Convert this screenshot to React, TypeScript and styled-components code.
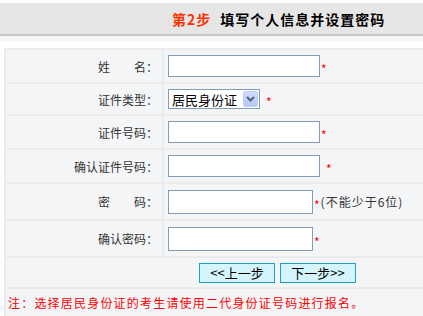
import styled, { createGlobalStyle } from 'styled-components';

const GlobalStyle = createGlobalStyle`
  * {
    box-sizing: border-box;
    margin: 0;
    padding: 0;
  }
  body {
    background: #fff;
    font-family: "Noto Sans CJK SC", "Liberation Sans", sans-serif;
    font-size: 12px;
    color: #333;
  }
`;

const Page = styled.div`
  width: 423px;
  padding-top: 3px;
  overflow: hidden;
`;

const StepBar = styled.div`
  height: 33px;
  background: #e6e6e6;
  border-bottom: 2px solid #c9c9c9;
  display: flex;
  align-items: center;
  padding-left: 172px;
  font-size: 14px;
  font-weight: bold;
  letter-spacing: 1px;
  color: #000;
`;

const StepNo = styled.span`
  color: #ff3300;
  margin-right: 9px;
`;

const Shade = styled.div`
  height: 5px;
  background: #f6f6f6;
  margin-bottom: 7px;
`;

const Table = styled.div`
  margin-left: 4px;
  width: 440px;
  display: grid;
  grid-template-columns: 156px 1fr;
  gap: 2px;
  background: #eaebed;
  padding: 2px 0 0 2px;
`;

const Label = styled.div<{ $h: number }>`
  height: ${p => p.$h}px;
  background: #f4f5f7;
  display: flex;
  align-items: center;
  justify-content: flex-end;
  padding-right: 4px;
  color: #333;
  white-space: pre;
`;

const Field = styled.div<{ $h: number }>`
  height: ${p => p.$h}px;
  background: #f4f5f7;
  display: flex;
  align-items: center;
  padding-left: 4px;
`;

const TextBox = styled.input<{ $w: number; $h: number }>`
  width: ${p => p.$w}px;
  height: ${p => p.$h}px;
  border: 1px solid #7f9db9;
  background: #fff;
  outline: none;
  font-size: 12px;
  padding: 0 3px;
`;

const Star = styled.span<{ $gap: number }>`
  color: #ff0000;
  font-size: 12px;
  margin-left: ${p => p.$gap}px;
  padding-top: 6px;
  line-height: 1;
`;

const Hint = styled.span`
  margin-left: 1px;
  color: #333;
  font-size: 12px;
  letter-spacing: 1px;
`;

const SelectBox = styled.div`
  position: relative;
  width: 92px;
  height: 20px;
  border: 1px solid #7f9db9;
  background: #fff;
  display: flex;
  align-items: center;
`;

const NativeSelect = styled.select`
  appearance: none;
  border: none;
  outline: none;
  background: transparent;
  width: 100%;
  height: 100%;
  padding-left: 3px;
  font-family: "Noto Sans CJK SC", sans-serif;
  font-size: 13px;
  color: #000;
`;

const Arrow = styled.span`
  position: absolute;
  right: 1px;
  top: 1px;
  width: 15px;
  height: 16px;
  border: 1px solid #bcd0f6;
  border-radius: 2px;
  background: linear-gradient(#cfdcfd, #b4c9f7);
  display: flex;
  align-items: center;
  justify-content: center;
  pointer-events: none;
`;

const ButtonRow = styled.div`
  grid-column: 1 / 3;
  height: 29px;
  background: #f4f5f7;
  display: flex;
  align-items: center;
  gap: 5px;
  padding-left: 193px;
`;

const StepButton = styled.button`
  width: 76px;
  height: 20px;
  background: #d4f5fc;
  border: 1px solid #1d9fca;
  font-family: "Noto Sans CJK SC", sans-serif;
  font-size: 13px;
  color: #000;
  line-height: 1;
`;

const Note = styled.div`
  grid-column: 1 / 3;
  height: 40px;
  background: #f4f5f7;
  padding: 5px 0 0 2px;
  color: #ff0000;
  font-size: 12px;
  letter-spacing: 1.2px;
`;

const App = () => {
  return (
    <>
      <GlobalStyle />
      <Page>
        <StepBar>
          <StepNo>第2步</StepNo>
          填写个人信息并设置密码
        </StepBar>
        <Shade />
        <Table>
          <Label $h={32}>{'姓\u3000\u3000名：'}</Label>
          <Field $h={32}>
            <TextBox $w={152} $h={22} />
            <Star $gap={1}>*</Star>
          </Field>

          <Label $h={30}>证件类型：</Label>
          <Field $h={30}>
            <SelectBox>
              <NativeSelect defaultValue="1">
                <option value="1">居民身份证</option>
              </NativeSelect>
              <Arrow>
                <svg width="9" height="6" viewBox="0 0 9 6">
                  <path d="M1 1 L4.5 4.5 L8 1" stroke="#4d6185" strokeWidth="2" fill="none" />
                </svg>
              </Arrow>
            </SelectBox>
            <Star $gap={6}>*</Star>
          </Field>

          <Label $h={32}>证件号码：</Label>
          <Field $h={32}>
            <TextBox $w={152} $h={22} />
            <Star $gap={1}>*</Star>
          </Field>

          <Label $h={32}>确认证件号码：</Label>
          <Field $h={32}>
            <TextBox $w={152} $h={22} />
            <Star $gap={6}>*</Star>
          </Field>

          <Label $h={35}>{'密\u3000\u3000码：'}</Label>
          <Field $h={35}>
            <TextBox type="password" $w={145} $h={24} />
            <Star $gap={1}>*</Star>
            <Hint>(不能少于6位)</Hint>
          </Field>

          <Label $h={35}>确认密码：</Label>
          <Field $h={35}>
            <TextBox type="password" $w={145} $h={24} />
            <Star $gap={1}>*</Star>
          </Field>

          <ButtonRow>
            <StepButton>&lt;&lt;上一步</StepButton>
            <StepButton>下一步&gt;&gt;</StepButton>
          </ButtonRow>

          <Note>注：选择居民身份证的考生请使用二代身份证号码进行报名。</Note>
        </Table>
      </Page>
    </>
  );
};

export default App;
